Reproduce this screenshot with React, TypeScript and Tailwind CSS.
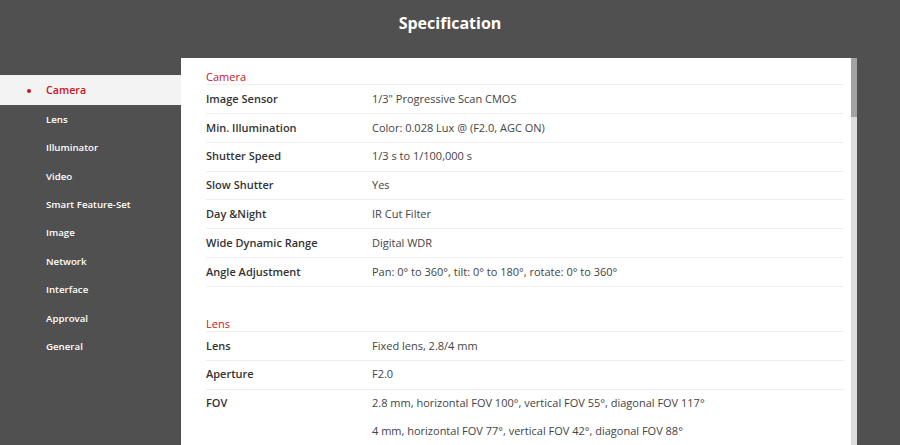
import React from "react";

const nav = ["Lens", "Illuminator", "Video", "Smart Feature-Set", "Image", "Network", "Interface", "Approval", "General"];

type Row = { label: string; values: string[] };
const sections: { title: string; rows: Row[] }[] = [
  {
    title: "Camera",
    rows: [
      { label: "Image Sensor", values: ['1/3" Progressive Scan CMOS'] },
      { label: "Min. Illumination", values: ["Color: 0.028 Lux @ (F2.0, AGC ON)"] },
      { label: "Shutter Speed", values: ["1/3 s to 1/100,000 s"] },
      { label: "Slow Shutter", values: ["Yes"] },
      { label: "Day &Night", values: ["IR Cut Filter"] },
      { label: "Wide Dynamic Range", values: ["Digital WDR"] },
      { label: "Angle Adjustment", values: ["Pan: 0° to 360°, tilt: 0° to 180°, rotate: 0° to 360°"] },
    ],
  },
  {
    title: "Lens",
    rows: [
      { label: "Lens", values: ["Fixed lens, 2.8/4 mm"] },
      { label: "Aperture", values: ["F2.0"] },
      {
        label: "FOV",
        values: [
          "2.8 mm, horizontal FOV 100°, vertical FOV 55°, diagonal FOV 117°",
          "4 mm, horizontal FOV 77°, vertical FOV 42°, diagonal FOV 88°",
        ],
      },
    ],
  },
];

export default function App() {
  return (
    <div
      className="w-[900px] h-[445px] overflow-hidden bg-[#505050] flex flex-col"
      style={{ fontFamily: '"Open Sans", "Noto Sans", sans-serif' }}
    >
      <div className="h-[58px] flex justify-center pt-[11px] shrink-0">
        <h1 className="text-[16px] leading-[24px] font-bold text-white">Specification</h1>
      </div>
      <div className="flex flex-1 min-h-0">
        <div className="w-[181px] shrink-0 pt-[17px]">
          <div className="h-[30px] bg-[#f3f3f3] flex items-center pl-[27px] pt-[1px]">
            <span className="w-[4px] h-[4px] rounded-full bg-[#c8161e] mr-[15px]" />
            <span className="text-[10.7px] font-semibold text-[#c8161e]">Camera</span>
          </div>
          <div className="pt-[1px]">
            {nav.map((n) => (
              <div key={n} className="h-[28.4px] flex items-center pl-[46px]">
                <span className="text-[9.7px] font-semibold text-white">{n}</span>
              </div>
            ))}
          </div>
        </div>
        <div className="w-[676px] shrink-0 bg-white flex">
          <div className="flex-1 pl-[25px] pr-[7px] pt-[11px]">
            {sections.map((s, si) => (
              <div key={s.title} className={si > 0 ? "mt-[29px]" : ""}>
                <div className="h-[16px] leading-[15px] border-b border-[#eeeeee] text-[11px] text-[#c8161e]">
                  {s.title}
                </div>
                {s.rows.map((r) => (
                  <div
                    key={r.label}
                    className={
                      "flex border-b text-[11px] text-[#333333] " +
                      (r.values.length > 1 ? "border-transparent" : "border-[#eeeeee]")
                    }
                  >
                    <div className="w-[166px] shrink-0 h-[27.85px] flex items-center font-semibold">{r.label}</div>
                    <div className="flex flex-col">
                      {r.values.map((v) => (
                        <div key={v} className="h-[27.85px] flex items-center text-[#444444]">
                          {v}
                        </div>
                      ))}
                    </div>
                  </div>
                ))}
              </div>
            ))}
          </div>
          <div className="w-[6px] bg-[#dddddd] flex flex-col">
            <div className="h-[59px] bg-[#a3a3a3]" />
          </div>
        </div>
      </div>
    </div>
  );
}
